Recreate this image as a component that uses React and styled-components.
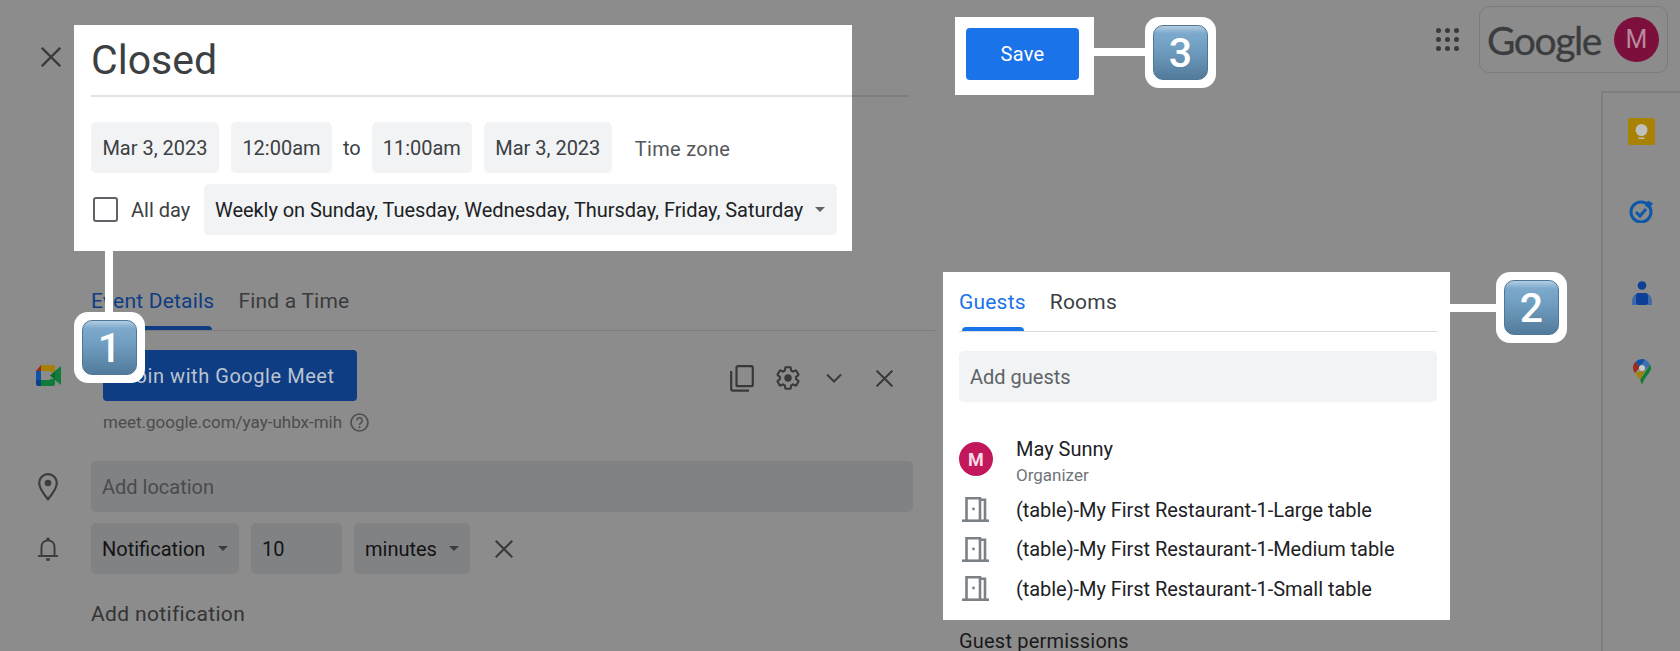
import React from "react";
import styled, { createGlobalStyle } from "styled-components";

const GlobalStyle = createGlobalStyle`
  html, body {
    margin: 0;
    padding: 0;
    background: #8c8c8c;
    font-family: Roboto, "Liberation Sans", sans-serif;
  }
  * { box-sizing: border-box; }
`;

const Page = styled.div`
  display: flex;
  width: 1680px;
  height: 651px;
  overflow: hidden;
  background: #8c8c8c;
  font-size: 20px;
`;

const LeftColumn = styled.div`
  width: 943px;
  flex-shrink: 0;
  padding-top: 25px;
`;

const TitleRow = styled.div`
  display: flex;
  align-items: flex-start;
  padding-left: 41px;
`;

const CloseButton = styled.button`
  width: 20px;
  height: 20px;
  margin: 22px 13px 0 0;
  padding: 0;
  border: 0;
  background: none;
  color: #3a3b3c;
  display: flex;
`;

const EventPanel = styled.section`
  position: relative;
  width: 778px;
  height: 226px;
  padding: 0 15px 0 17px;
  background: #fff;
  z-index: 2;
`;

const Title = styled.h1`
  height: 70px;
  margin: 0;
  font-size: 41px;
  font-weight: 400;
  line-height: 70px;
  color: #3c4043;
`;

const TitleRule = styled.div`
  width: 818px;
  height: 2px;
  background: linear-gradient(to right, #e1e2e4 761px, #7e7e7e 761px);
`;

const DateRow = styled.div`
  display: flex;
  align-items: center;
  gap: 12px;
  margin-top: 25px;
`;

const Chip = styled.div`
  display: flex;
  align-items: center;
  justify-content: ${(p) => (p.$center ? "center" : "flex-start")};
  flex-shrink: 0;
  width: ${(p) => p.$w}px;
  height: 51px;
  padding: 0 11px;
  border-radius: 5px;
  background: ${(p) => (p.$dim ? "#818284" : "#f1f3f4")};
  color: ${(p) => (p.$dim ? "#131314" : "#3c4043")};
  white-space: nowrap;
`;

const ToLabel = styled.span`
  margin: 0 -1px;
  color: #3c4043;
`;

const TimeZone = styled.span`
  margin-left: 11px;
  margin-top: 3px;
  color: #54575b;
  font-size: 20px;
  letter-spacing: 0.3px;
`;

const RecurRow = styled.div`
  display: flex;
  align-items: center;
  margin-top: 11px;
`;

const CheckBox = styled.span`
  width: 25px;
  height: 25px;
  margin: 0 13px 0 2px;
  border: 2px solid #5f6368;
  border-radius: 3px;
`;

const AllDay = styled.span`
  width: 73px;
  color: #3c4043;
`;

const Recurrence = styled(Chip)`
  justify-content: space-between;
  padding-right: 12px;
  color: #202124;
  letter-spacing: -0.05px;
`;

const Caret = styled.span`
  width: 0;
  height: 0;
  flex-shrink: 0;
  border-left: 5px solid transparent;
  border-right: 5px solid transparent;
  border-top: 5px solid ${(p) => (p.$dim ? "#3b3c3d" : "#5f6368")};
`;

const Connector = styled.div`
  flex-shrink: 0;
  width: ${(p) => p.$w}px;
  height: 8px;
  margin-top: ${(p) => p.$top || 0}px;
  background: #fff;
`;

const BadgeFrame = styled.div`
  flex-shrink: 0;
  width: 71px;
  height: 71px;
  padding: 8px;
  border-radius: 14px;
  background: #fff;
`;

const BadgeKey = styled.div`
  display: flex;
  align-items: center;
  justify-content: center;
  width: 100%;
  height: 100%;
  border-radius: 10px;
  border: 1px solid #4f7898;
  background: linear-gradient(#b3cde2 0, #7ca9cc 14%, #6f9dc0 45%, #527a9a 100%);
  color: #fff;
  font-family: Roboto, sans-serif;
  font-size: 41px;
  font-weight: 500;
`;

const FloatingCallout = styled.div`
  position: absolute;
  left: 0;
  top: 226px;
  display: flex;
  flex-direction: column;
  z-index: 3;
`;

const CalloutStem = styled.div`
  width: 8px;
  height: 61px;
  margin-left: 31px;
  background: #fff;
`;

const TabBar = styled.div`
  display: flex;
  align-items: flex-end;
  gap: ${(p) => p.$gap}px;
  height: ${(p) => p.$h}px;
  margin-left: ${(p) => p.$left || 0}px;
  width: ${(p) => p.$w}px;
  border-bottom: 1px solid ${(p) => p.$line};
`;

const Tab = styled.div`
  position: relative;
  height: 49px;
  padding-top: 6px;
  font-size: 21px;
  letter-spacing: 0.2px;
  line-height: 28px;
  color: ${(p) => p.$color};
  &::after {
    content: "";
    display: ${(p) => (p.$active ? "block" : "none")};
    position: absolute;
    left: 3px;
    right: 2px;
    bottom: 0;
    height: 4px;
    border-radius: 4px 4px 0 0;
    background: ${(p) => p.$color};
  }
`;

const DetailRow = styled.div`
  display: flex;
  align-items: ${(p) => p.$align || "center"};
  margin-top: ${(p) => p.$top}px;
`;

const Gutter = styled.div`
  display: flex;
  flex-shrink: 0;
  width: 91px;
  padding-left: ${(p) => p.$left || 36}px;
  color: #3c3d3e;
`;

const MeetContent = styled.div`
  display: flex;
  align-items: center;
  width: 810px;
  padding-left: 12px;
`;

const MeetButton = styled.button`
  width: 254px;
  height: 51px;
  border: 0;
  border-radius: 4px;
  padding: 0 0 0 21px;
  background: #0e3d84;
  color: #bcc4d0;
  font-family: inherit;
  font-size: 20px;
  letter-spacing: 0.55px;
  text-align: left;
  white-space: nowrap;
`;

const MeetActions = styled.div`
  display: flex;
  align-items: center;
  margin-left: auto;
  padding: 5px 8px 0 0;
  color: #38393a;
`;

const ActionIcon = styled.span`
  display: flex;
  margin-left: ${(p) => p.$gap}px;
`;

const MeetLink = styled.div`
  display: flex;
  align-items: center;
  gap: 8px;
  margin: 11px 0 0 103px;
  color: #4b4c4e;
  font-size: 17px;
`;

const LocationField = styled(Chip)`
  color: #4a4b4d;
`;

const NotificationChips = styled.div`
  display: flex;
  align-items: center;
  gap: 12px;
`;

const NotificationChip = styled(Chip)`
  justify-content: space-between;
  padding-right: 11px;
`;

const RemoveIcon = styled.span`
  display: flex;
  margin-left: 25px;
  color: #38393a;
`;

const AddNotification = styled.div`
  margin: 26px 0 0 91px;
  color: #333435;
  font-size: 21px;
  letter-spacing: 0.35px;
  line-height: 28px;
`;

const RightColumn = styled.div`
  flex: 1;
  display: flex;
  flex-direction: column;
  min-width: 0;
`;

const TopBar = styled.header`
  display: flex;
  align-items: flex-start;
  height: 91px;
  padding: 6px 12px 0 12px;
`;

const SaveGroup = styled.div`
  display: flex;
  align-items: flex-start;
  margin-top: 11px;
`;

const SavePanel = styled.div`
  width: 139px;
  height: 78px;
  padding: 11px;
  background: #fff;
`;

const SaveButton = styled.button`
  width: 113px;
  height: 52px;
  border: 0;
  border-radius: 4px;
  background: #1a73e8;
  color: #fff;
  font-family: inherit;
  font-size: 20px;
  letter-spacing: 0.3px;
`;

const AppsIcon = styled.div`
  display: grid;
  grid-template-columns: repeat(3, 5px);
  gap: 4px;
  margin: 22px 20px 0 auto;
  span {
    width: 5px;
    height: 5px;
    border-radius: 50%;
    background: #393a3b;
  }
`;

const AccountBox = styled.div`
  display: flex;
  align-items: center;
  justify-content: space-between;
  width: 189px;
  height: 67px;
  padding: 0 8px 0 7px;
  border: 1px solid #7b7b7b;
  border-radius: 10px;
`;

const Wordmark = styled.span`
  color: #3b3c3e;
  font-family: Lato, sans-serif;
  font-size: 39px;
  letter-spacing: -1.4px;
  -webkit-text-stroke: 0.3px #3b3c3e;
`;

const AccountAvatar = styled.span`
  display: flex;
  align-items: center;
  justify-content: center;
  width: 45px;
  height: 45px;
  border-radius: 50%;
  background: #7c0f3c;
  color: #b9899d;
  font-size: 25px;
`;

const Body = styled.div`
  flex: 1;
  display: flex;
  min-height: 0;
`;

const GuestsArea = styled.div`
  width: 658px;
  flex-shrink: 0;
  padding-top: 181px;
`;

const GuestsRow = styled.div`
  display: flex;
  align-items: flex-start;
`;

const GuestsPanel = styled.section`
  width: 507px;
  height: 348px;
  padding: 0 13px 0 16px;
  background: #fff;
`;

const GuestField = styled(Chip)`
  margin-top: 19px;
  color: #5f6368;
`;

const GuestList = styled.div`
  margin-top: 26px;
  display: flex;
  flex-direction: column;
`;

const Organizer = styled.div`
  display: flex;
  align-items: center;
  gap: 23px;
  height: 62px;
`;

const OrganizerText = styled.div`
  padding-top: 5px;
`;

const GuestAvatar = styled.span`
  display: flex;
  align-items: center;
  justify-content: center;
  width: 34px;
  height: 34px;
  border-radius: 50%;
  background: #c2185b;
  color: #f6dbe6;
  font-size: 18px;
  font-weight: 700;
  flex-shrink: 0;
`;

const GuestName = styled.div`
  color: #202124;
  font-size: 20px;
  line-height: 24px;
`;

const GuestRole = styled.div`
  color: #70757a;
  font-size: 17px;
  line-height: 22px;
  margin-top: 3px;
`;

const RoomRow = styled.div`
  display: flex;
  align-items: center;
  height: 39.5px;
  padding-left: 3px;
  gap: 27px;
  color: #202124;
  letter-spacing: -0.05px;
  white-space: nowrap;
`;

const GuestPermissions = styled.div`
  margin: 9px 0 0 16px;
  color: #1a1a1b;
  font-size: 20px;
  letter-spacing: 0.2px;
  line-height: 24px;
`;

const SidePanel = styled.aside`
  flex: 1;
  display: flex;
  flex-direction: column;
  align-items: center;
  padding: 25px 0 0 0;
  border-left: 2px solid #7f7f7f;
  border-top: 2px solid #7f7f7f;
`;

const SideIcon = styled.div`
  display: flex;
  margin-bottom: ${(p) => p.$gap}px;
`;

const LineIcon = ({ size = 24, width = 2, children, viewBox = "0 0 24 24" }) => (
  <svg width={size} height={size} viewBox={viewBox} fill="none" stroke="currentColor" strokeWidth={width}>
    {children}
  </svg>
);

const CrossIcon = ({ size = 20 }) => (
  <LineIcon size={size} viewBox="0 0 20 20" width={2.3}>
    <path d="M.8.8l18.4 18.4M19.2.8L.8 19.2" />
  </LineIcon>
);

const CopyIcon = () => (
  <svg width="24" height="27" viewBox="0 0 24 27" fill="none" stroke="currentColor" strokeWidth="2.2">
    <rect x="6.5" y="1.2" width="16.3" height="20" rx="1.5" />
    <path d="M1.2 6v18.2a1.500 1.500 0 0 0 1.500 1.500h16.300" />
  </svg>
);

const GearIcon = () => (
  <LineIcon size={26} width={1.9}>
    <path d="M19.43 12.98c.04-.32.07-.64.07-.98s-.03-.66-.07-.98l2.11-1.65c.19-.15.24-.42.12-.64l-2-3.46c-.12-.22-.39-.3-.61-.22l-2.49 1c-.52-.4-1.08-.73-1.69-.98l-.38-2.65C14.46 2.18 14.25 2 14 2h-4c-.25 0-.46.18-.49.42l-.38 2.65c-.61.25-1.17.59-1.69.98l-2.49-1c-.23-.09-.49 0-.61.22l-2 3.46c-.13.22-.07.49.12.64l2.11 1.65c-.04.32-.07.65-.07.98s.03.66.07.98l-2.11 1.65c-.19.15-.24.42-.12.64l2 3.46c.12.22.39.3.61.22l2.49-1c.52.4 1.08.73 1.69.98l.38 2.65c.03.24.24.42.49.42h4c.25 0 .46-.18.49-.42l.38-2.65c.61-.25 1.17-.59 1.69-.98l2.49 1c.23.09.49 0 .61-.22l2-3.46c.12-.22.07-.49-.12-.64l-2.11-1.65z" />
    <circle cx="12" cy="12" r="3.4" fill="currentColor" stroke="none" />
  </LineIcon>
);

const ChevronIcon = () => (
  <svg width="16" height="10" viewBox="0 0 16 10" fill="none" stroke="currentColor" strokeWidth="2">
    <path d="M1 1.500l7 7 7-7" />
  </svg>
);

const HelpIcon = () => (
  <svg width="19" height="19" viewBox="0 0 19 19" fill="none" stroke="currentColor" strokeWidth="1.6">
    <circle cx="9.5" cy="9.5" r="8.5" />
    <path d="M6.8 7.4a2.7 2.7 0 1 1 4.3 2.2c-1 .7-1.6 1.2-1.6 2.4" />
    <circle cx="9.5" cy="14.3" r="1" fill="currentColor" stroke="none" />
  </svg>
);

const PinIcon = () => (
  <svg width="20" height="28" viewBox="0 0 20 28" fill="none" stroke="currentColor" strokeWidth="2.2">
    <path d="M10 1.200C5 1.200 1.200 5.200 1.200 10c0 5.800 8.800 16.200 8.800 16.200S18.800 15.800 18.800 10c0-4.800-3.800-8.800-8.800-8.800z" />
    <circle cx="10" cy="10" r="3.300" fill="currentColor" stroke="none" />
  </svg>
);

const BellIcon = () => (
  <svg width="20" height="24" viewBox="0 0 20 24" fill="none" stroke="currentColor" strokeWidth="2">
    <path d="M3.500 18.500V10c0-3.800 2.800-6.500 6.500-6.500s6.500 2.700 6.500 6.500v8.500M0 19h20" />
    <circle cx="10" cy="2.200" r="1.800" fill="currentColor" stroke="none" />
    <path d="M8 22.500h4" strokeWidth="2.400" />
  </svg>
);

const MeetLogo = () => (
  <svg width="25" height="21" viewBox="0 0 25 21">
    <path d="M0 6l5-6v6z" fill="#9a2b20" />
    <path d="M5 0h12a2 2 0 0 1 2 2v5h-5V6H5z" fill="#a67f06" />
    <path d="M0 6h5v9H0z" fill="#0f52a6" />
    <path d="M0 15h5v6H2a2 2 0 0 1-2-2z" fill="#0c3f88" />
    <path d="M5 15h9v-1h5v5a2 2 0 0 1-2 2H5z" fill="#0f7d39" />
    <path d="M14 10.500l5-4.500v9z" fill="#0c6a2f" />
    <path d="M19 6l6-5v19l-6-5z" fill="#0f7d39" />
  </svg>
);

const DoorIcon = () => (
  <svg width="27" height="25" viewBox="0 0 27 25" fill="none" stroke="#7b8187" strokeWidth="2.600">
    <path d="M0 23.700h27" />
    <path d="M4.500 24V1.300h13.500V24M18 2.800h5V24" />
    <circle cx="11.500" cy="12" r="1.400" fill="#7b8187" stroke="none" />
  </svg>
);

const KeepIcon = () => (
  <svg width="27" height="27" viewBox="0 0 27 27">
    <rect width="27" height="27" rx="2" fill="#a88105" />
    <circle cx="13.500" cy="12" r="6" fill="#bfbfbf" />
    <path d="M11 14h5v3.500h-5z" fill="#bfbfbf" />
    <path d="M10.500 19.500h6v1.500h-6z" fill="#bfbfbf" />
  </svg>
);

const TasksIcon = () => (
  <svg width="26" height="24" viewBox="0 0 26 24" fill="none" stroke="#0f57a8">
    <circle cx="12" cy="13" r="10" strokeWidth="3" />
    <path d="M7 13l4 4 6-7" strokeWidth="3" />
    <path d="M19 1.500l5 3-4 5-4-3z" fill="#0f57a8" stroke="none" />
  </svg>
);

const ContactsIcon = () => (
  <svg width="20" height="24" viewBox="0 0 20 24">
    <circle cx="10" cy="4.500" r="4.300" fill="#0c3f96" />
    <path d="M0 24v-4a8 8 0 0 1 8-8h6v12z" fill="#3f6aa8" />
    <path d="M20 24v-4a8 8 0 0 0-8-8H6a2 2 0 0 0-2 2v10z" fill="#3f6aa8" />
    <rect x="4" y="12" width="12" height="12" rx="3" fill="#0c3f96" />
  </svg>
);

const MapsIcon = () => (
  <svg width="18" height="26" viewBox="0 0 18 26">
    <path d="M2.600 2.700L7 8l-5 6C.800 12.500 0 11 0 9c0-2.500 1-4.700 2.600-6.300z" fill="#9a2b20" />
    <path d="M2.600 2.700A9 9 0 0 1 9 0c1.200 0 2.300.2 3.300.700L7 8z" fill="#0f52a6" />
    <path d="M12.300.700A9 9 0 0 1 17 5.500L12 11l-5-3z" fill="#3b70b3" />
    <path d="M2 14l10-3-3.500 7c-.5 1-1 2-1.500 3-1-2.500-3.500-4.500-5-7z" fill="#a67f06" />
    <path d="M17 5.500c.6 1.100 1 2.300 1 3.500 0 5-6.500 8-9 17-.4-1.800-1-3.500-2-5z" fill="#0f7d39" />
    <circle cx="9" cy="9" r="3" fill="#c9c9c9" />
  </svg>
);

const Badge = ({ n }) => (
  <BadgeFrame>
    <BadgeKey>{n}</BadgeKey>
  </BadgeFrame>
);

const rooms = ["Large", "Medium", "Small"];

const App = () => {
  return (
    <Page>
      <GlobalStyle />
      <LeftColumn>
        <TitleRow>
          <CloseButton>
            <CrossIcon />
          </CloseButton>
          <EventPanel>
            <Title>Closed</Title>
            <TitleRule />
            <DateRow>
              <Chip $w={128} $center>Mar 3, 2023</Chip>
              <Chip $w={101} $center>12:00am</Chip>
              <ToLabel>to</ToLabel>
              <Chip $w={100} $center>11:00am</Chip>
              <Chip $w={128} $center>Mar 3, 2023</Chip>
              <TimeZone>Time zone</TimeZone>
            </DateRow>
            <RecurRow>
              <CheckBox />
              <AllDay>All day</AllDay>
              <Recurrence $w={633}>
                Weekly on Sunday, Tuesday, Wednesday, Thursday, Friday, Saturday
                <Caret />
              </Recurrence>
            </RecurRow>
            <FloatingCallout>
              <CalloutStem />
              <Badge n="1" />
            </FloatingCallout>
          </EventPanel>
        </TitleRow>

        <TabBar $h={80} $w={844} $left={91} $gap={24} $line="#7c7c7c">
          <Tab $active $color="#0e3d84">Event Details</Tab>
          <Tab $color="#3a3b3c">Find a Time</Tab>
        </TabBar>

        <DetailRow $top={19}>
          <Gutter>
            <MeetLogo />
          </Gutter>
          <MeetContent>
            <MeetButton>Join with Google Meet</MeetButton>
            <MeetActions>
              <ActionIcon $gap={0}><CopyIcon /></ActionIcon>
              <ActionIcon $gap={21}><GearIcon /></ActionIcon>
              <ActionIcon $gap={25}><ChevronIcon /></ActionIcon>
              <ActionIcon $gap={34}><CrossIcon size={17} /></ActionIcon>
            </MeetActions>
          </MeetContent>
        </DetailRow>
        <MeetLink>
          meet.google.com/yay-uhbx-mih
          <HelpIcon />
        </MeetLink>

        <DetailRow $top={29}>
          <Gutter $left={38}>
            <PinIcon />
          </Gutter>
          <LocationField $w={822} $dim>Add location</LocationField>
        </DetailRow>

        <DetailRow $top={11}>
          <Gutter $left={38}>
            <BellIcon />
          </Gutter>
          <NotificationChips>
            <NotificationChip $w={148} $dim>Notification<Caret $dim /></NotificationChip>
            <Chip $w={91} $dim>10</Chip>
            <NotificationChip $w={116} $dim>minutes<Caret $dim /></NotificationChip>
          </NotificationChips>
          <RemoveIcon><CrossIcon size={18} /></RemoveIcon>
        </DetailRow>

        <AddNotification>Add notification</AddNotification>
      </LeftColumn>

      <RightColumn>
        <TopBar>
          <SaveGroup>
            <SavePanel>
              <SaveButton>Save</SaveButton>
            </SavePanel>
            <Connector $w={51} $top={31} />
            <Badge n="3" />
          </SaveGroup>
          <AppsIcon>
            {Array.from({ length: 9 }).map((_, i) => (
              <span key={i} />
            ))}
          </AppsIcon>
          <AccountBox>
            <Wordmark>Google</Wordmark>
            <AccountAvatar>M</AccountAvatar>
          </AccountBox>
        </TopBar>

        <Body>
          <GuestsArea>
            <GuestsRow>
              <GuestsPanel>
                <TabBar $h={60} $gap={24} $line="#dadce0">
                  <Tab $active $color="#1a73e8">Guests</Tab>
                  <Tab $color="#3c4043">Rooms</Tab>
                </TabBar>
                <GuestField $w={478}>Add guests</GuestField>
                <GuestList>
                  <Organizer>
                    <GuestAvatar>M</GuestAvatar>
                    <OrganizerText>
                      <GuestName>May Sunny</GuestName>
                      <GuestRole>Organizer</GuestRole>
                    </OrganizerText>
                  </Organizer>
                  {rooms.map((r) => (
                    <RoomRow key={r}>
                      <DoorIcon />
                      {`(table)-My First Restaurant-1-${r} table`}
                    </RoomRow>
                  ))}
                </GuestList>
              </GuestsPanel>
              <Connector $w={46} $top={32} />
              <Badge n="2" />
            </GuestsRow>
            <GuestPermissions>Guest permissions</GuestPermissions>
          </GuestsArea>

          <SidePanel>
            <SideIcon $gap={54}><KeepIcon /></SideIcon>
            <SideIcon $gap={58}><TasksIcon /></SideIcon>
            <SideIcon $gap={54}><ContactsIcon /></SideIcon>
            <SideIcon $gap={0}><MapsIcon /></SideIcon>
          </SidePanel>
        </Body>
      </RightColumn>
    </Page>
  );
};

export default App;
